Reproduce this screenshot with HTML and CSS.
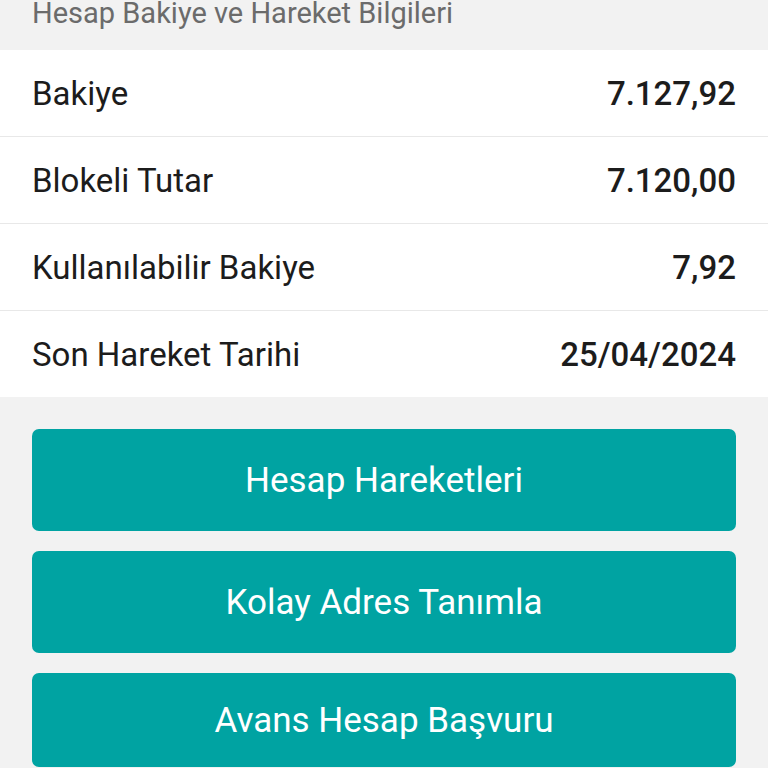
FILE: index.html
```html
<!DOCTYPE html>
<html lang="tr">
<head>
<meta charset="utf-8">
<title>Hesap Bakiye ve Hareket Bilgileri</title>
<link rel="stylesheet" href="styles.css">
</head>
<body>
<div class="page">
  <div class="section-title">Hesap Bakiye ve Hareket Bilgileri</div>
  <div class="list">
    <div class="row"><span class="label">Bakiye</span><span class="value">7.127,92</span></div>
    <div class="row"><span class="label">Blokeli Tutar</span><span class="value">7.120,00</span></div>
    <div class="row"><span class="label">Kullanılabilir Bakiye</span><span class="value">7,92</span></div>
    <div class="row"><span class="label">Son Hareket Tarihi</span><span class="value">25/04/2024</span></div>
  </div>
  <div class="actions">
    <button class="btn btn-a">Hesap Hareketleri</button>
    <button class="btn btn-b">Kolay Adres Tanımla</button>
    <button class="btn btn-c">Avans Hesap Başvuru</button>
  </div>
</div>
</body>
</html>
```
FILE: styles.css
```css
html, body {
  margin: 0;
  padding: 0;
  background: #f2f2f2;
}
body {
  font-family: Roboto, "Noto Sans", "Liberation Sans", sans-serif;
  overflow: hidden;
  height: 768px;
}
.page {
  display: flex;
  flex-direction: column;
}
.section-title {
  height: 50px;
  box-sizing: border-box;
  padding: 0 32px;
  font-size: 29px;
  line-height: 26px;
  color: #6b6b6b;
}
.list {
  background: #ffffff;
  display: flex;
  flex-direction: column;
}
.row {
  height: 87px;
  box-sizing: border-box;
  display: flex;
  align-items: center;
  justify-content: space-between;
  padding: 0 32px;
  border-bottom: 1.5px solid #e8e8e8;
}
.row:last-child {
  border-bottom: none;
  height: 86px;
}
.label {
  font-size: 33px;
  color: #1c1c1c;
}
.value {
  font-size: 33px;
  font-weight: 500;
  color: #1c1c1c;
}
.actions {
  display: flex;
  flex-direction: column;
  gap: 20px;
  padding: 32px 32px 0;
}
.btn {
  border: none;
  border-radius: 7px;
  background: #00a3a2;
  color: #ffffff;
  font-family: Roboto, "Noto Sans", "Liberation Sans", sans-serif;
  font-size: 35px;
  height: 102px;
  padding: 0;
  margin: 0;
}
.btn-c {
  height: 94px;
}
```
